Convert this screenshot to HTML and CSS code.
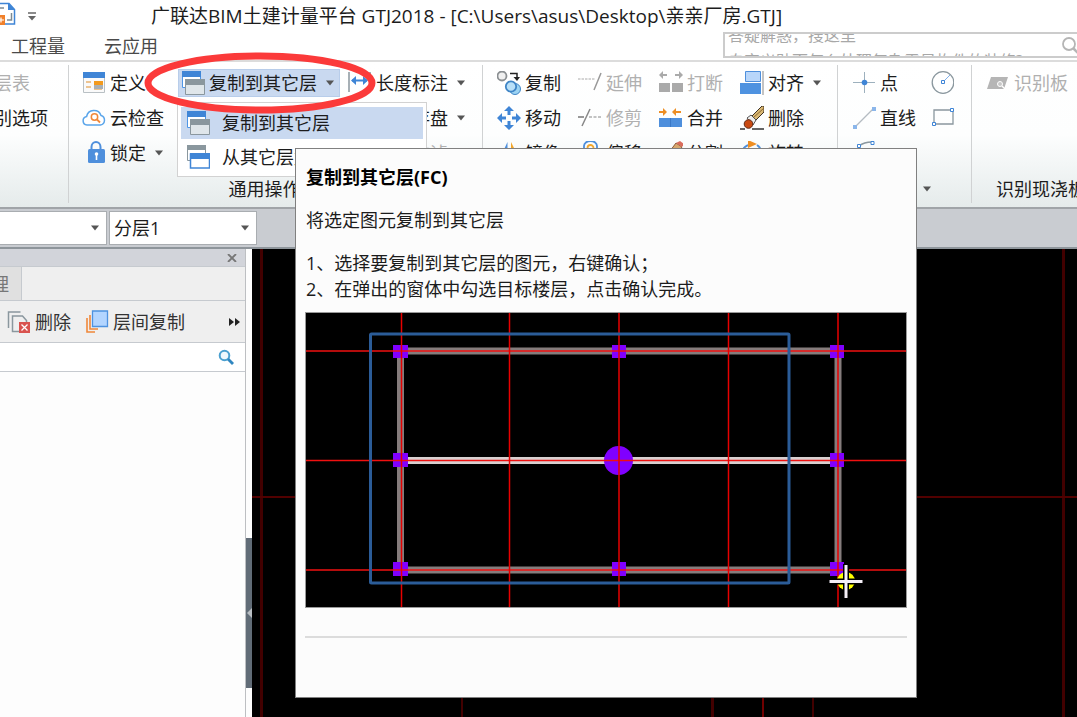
FILE: index.html
```html
<!DOCTYPE html>
<html lang="zh-CN">
<head>
<meta charset="utf-8">
<meta name="viewport" content="width=device-width, initial-scale=1">
<title>广联达BIM土建计量平台 GTJ2018</title>
<link rel="stylesheet" href="styles.css">
</head>
<body>
<svg class="defs" width="0" height="0" aria-hidden="true">
  <symbol id="caret" viewBox="0 0 10 6"><path d="M1 0.500h8L5 5.500z" fill="#555"/></symbol>
  <symbol id="copy-to" viewBox="0 0 24 26">
    <path d="M1.500 1.500h18v16h-18z" fill="#fff" stroke="#4e96e6"/><path d="M1 1h19v6H1z" fill="#3f85d6"/>
    <path d="M4.500 10h19v14.500h-19z" fill="#dfe6ea" stroke="#8a979e"/><path d="M4 9h20v6H4z" fill="#8a979e"/>
  </symbol>
  <symbol id="copy-from" viewBox="0 0 24 26">
    <path d="M1.500 1.500h18v15h-18z" fill="#fff" stroke="#8a979e"/><path d="M1 1h19v5H1z" fill="#8a979e"/>
    <path d="M4.500 10h19v14h-19z" fill="#fff" stroke="#3f85d6" stroke-width="1.500"/><path d="M4 9h20v6H4z" fill="#3f85d6"/>
  </symbol>
</svg>

<div class="app">
  <header class="titlebar">
    <button class="quick" aria-label="查看">
      <svg width="16" height="24" viewBox="0 0 16 24"><path d="M0 1.500h9l5.500 6v14.500H5" fill="#fff" stroke="#3f85d6" stroke-width="1.500"/><path d="M8 1l7 7H8z" fill="#3f85d6"/><path d="M0 6h4M11.500 11v7H7" fill="none" stroke="#7d8a92" stroke-width="1.500"/><path d="M0 13h5v10H0z" fill="#f0802b"/><path d="M0 18h4M1 15.500v5" stroke="#fff" stroke-width="1.200"/></svg>
    </button>
    <button class="quick" aria-label="自定义快速访问工具栏">
      <svg width="8" height="9" viewBox="0 0 8 9"><path d="M0 1h8" stroke="#666" stroke-width="1.500"/><path d="M0 4h8L4 8.500z" fill="#666"/></svg>
    </button>
    <h1 class="title">广联达BIM土建计量平台 GTJ2018 - [C:\Users\asus\Desktop\亲亲厂房.GTJ]</h1>
  </header>

  <nav class="tabs">
    <button class="tab">工程量</button>
    <button class="tab">云应用</button>
    <label class="search">
      <span class="ticker"><span>答疑解惑，搜这里</span><span>自定义贴面怎么处理复杂零星构件的装修?</span></span>
      <input class="search-input" type="text" aria-label="搜索">
      <svg class="search-icon" width="20" height="18" viewBox="0 0 20 18"><circle cx="8" cy="7" r="6" fill="none" stroke="#b5b5b5" stroke-width="1.800"/><path d="M12 11l6 6" stroke="#b5b5b5" stroke-width="2.500"/></svg>
    </label>
  </nav>

  <section class="ribbon">
    <div class="group group-select">
      <div class="cols"><div class="col">
        <button class="tool" disabled>楼层表</button>
        <button class="tool">识别选项</button>
      </div></div>
    </div>

    <div class="group group-common">
      <div class="cols">
        <div class="col">
          <button class="tool"><svg class="ico" viewBox="0 0 24 24"><path d="M1.500 1.500h21v20h-21z" fill="#fafafa" stroke="#b9c0c4"/><path d="M1 1h22v6H1z" fill="#3f85d6"/><path d="M4 11h5M4 16h5M12 18h8" stroke="#e9b36f" stroke-width="1.300"/><path d="M12 10h9v4h-9z" fill="#f39a1d"/><path d="M12 14h9v4h-9z" fill="#aab0b4"/></svg>定义</button>
          <button class="tool"><svg class="ico" viewBox="0 0 24 24"><path d="M5 19a4.300 4.300 0 0 1-.4-8.500A7.500 7.500 0 0 1 19 9.500 4.900 4.900 0 0 1 18.500 19z" fill="#fff" stroke="#5aa5ea" stroke-width="1.500"/><circle cx="12.500" cy="11" r="3.200" fill="none" stroke="#f0883a" stroke-width="1.500"/><path d="M15 13.500l3 3" stroke="#f0883a" stroke-width="1.800"/></svg>云检查</button>
          <button class="tool"><svg class="ico" viewBox="0 0 24 24"><path d="M9.500 10V6a4.500 5 0 0 1 9 0v4" fill="none" stroke="#4e8fdc" stroke-width="2"/><rect x="6" y="8" width="17" height="14" rx="1.500" fill="#4e8fdc"/><path d="M14.500 13v6" stroke="#fff" stroke-width="1.600"/><circle cx="14.500" cy="13" r="1.800" fill="#fff"/></svg>锁定<svg class="caret"><use href="#caret"/></svg></button>
        </div>
        <div class="col">
          <button class="tool split" aria-expanded="true"><svg class="ico tall"><use href="#copy-to"/></svg>复制到其它层<svg class="caret"><use href="#caret"/></svg></button>
          <div class="menu" role="menu">
            <button class="menu-item current" role="menuitem"><svg class="ico tall"><use href="#copy-to"/></svg>复制到其它层</button>
            <button class="menu-item" role="menuitem"><svg class="ico tall"><use href="#copy-from"/></svg>从其它层复制</button>
          </div>
        </div>
        <div class="col">
          <button class="tool"><svg class="ico" viewBox="0 0 24 24"><path d="M1 1v20M22 1v20" stroke="#8a979e" stroke-width="1.500"/><path d="M4 9.500h15" stroke="#3f85d6" stroke-width="2"/><path d="M3 9.500L8 5v9zM20 9.500L15 5v9z" fill="#3f85d6"/></svg>长度标注<svg class="caret"><use href="#caret"/></svg></button>
          <button class="tool"><svg class="ico" viewBox="0 0 24 24"><path d="M3 3h18v18H3z" fill="#4e8fdc"/></svg>图元存盘<svg class="caret"><use href="#caret"/></svg></button>
          <button class="tool" disabled><svg class="ico" viewBox="0 0 24 24"><path d="M3 4h18l-7 8v8h-4v-8z" fill="#bbb"/></svg>图元过滤</button>
        </div>
      </div>
      <div class="group-name">通用操作<svg class="caret"><use href="#caret"/></svg></div>
    </div>

    <div class="group group-modify">
      <div class="cols">
        <div class="col">
          <button class="tool"><svg class="ico" viewBox="0 0 24 24"><circle cx="5" cy="5" r="4.500" fill="#f0f0f0" stroke="#8b8f92" stroke-width="1.800"/><path d="M13 2.500h7v5" fill="none" stroke="#222" stroke-width="1.500"/><path d="M16.500 6h6.500l-3 4z" fill="#222"/><circle cx="18" cy="18" r="5.500" fill="#9cd3f2" stroke="#3f85c6"/><circle cx="14" cy="15.500" r="5.200" fill="#b9e0f8" stroke="#3f85c6" stroke-width="1.800"/></svg>复制</button>
          <button class="tool"><svg class="ico" viewBox="0 0 24 24"><path d="M12 0l5 5h-3.500v4h-3V5H7zM12 24l5-5h-3.500v-4h-3v4H7zM0 12l5-5v3.500h4v3H5V17zM24 12l-5-5v3.500h-4v3h4V17z" fill="#3f85d6"/></svg>移动</button>
          <button class="tool"><svg class="ico" viewBox="0 0 24 24"><path d="M10.500 1v20L2 19z" fill="#4e8fdc"/><path d="M14 1v20l9-2z" fill="#f3a72c"/></svg>镜像</button>
        </div>
        <div class="col">
          <button class="tool" disabled><svg class="ico" viewBox="0 0 24 24"><path d="M0 8h17" stroke="#aaa" stroke-dasharray="2.500 1"/><path d="M16 19l7-17" stroke="#999" stroke-width="1.500"/></svg>延伸</button>
          <button class="tool" disabled><svg class="ico" viewBox="0 0 24 24"><path d="M0 11h6" stroke="#777" stroke-width="1.500"/><path d="M11 11h13" stroke="#888" stroke-width="1.200" stroke-dasharray="3 1.500"/><path d="M4 20l8-17" stroke="#888" stroke-width="1.500"/></svg>修剪</button>
          <button class="tool"><svg class="ico" viewBox="0 0 24 24"><path d="M6 20V5a6.500 5 0 0 1 13 0v15" fill="none" stroke="#4e8fdc" stroke-width="1.800"/><path d="M9.500 20V7a3 3 0 0 1 6 0v13" fill="none" stroke="#f3a72c" stroke-width="1.800"/></svg>偏移</button>
        </div>
        <div class="col">
          <button class="tool" disabled><svg class="ico" viewBox="0 0 24 24"><path d="M0 12h11v9H0zM13 12h11v9H13z" fill="#aaa"/><path d="M0 4l4-4v3h4v2H4v3zM24 4l-4-4v3h-4v2h4v3z" fill="#aaa"/></svg>打断</button>
          <button class="tool"><svg class="ico" viewBox="0 0 24 24"><path d="M0 12h11v9H0zM12 12h11v9H12z" fill="#4e8fdc"/><path d="M11 12h1v9h-1z" fill="#3a78c6"/><path d="M8 6l-4-4v3H0v2h4v3zM13 6l4-4v3h5v2h-5v3z" fill="#ee8e23"/></svg>合并</button>
          <button class="tool"><svg class="ico" viewBox="0 0 24 24"><path d="M8 14l9-12 6 4-9 12z" fill="#d8a86e" stroke="#8a5a38"/><path d="M17 2l4-2 4 3-2 3z" fill="#d96c5c"/></svg>分割</button>
        </div>
        <div class="col">
          <button class="tool"><svg class="ico" viewBox="0 0 24 24"><path d="M5.500 .500h15v10h-15z" fill="#b8d6fa" stroke="#4e8fdc"/><path d="M0 12h21v11H0z" fill="#4e92e0"/><path d="M23 0v24" stroke="#888"/></svg>对齐<svg class="caret"><use href="#caret"/></svg></button>
          <button class="tool"><svg class="ico" viewBox="0 0 24 24"><path d="M0 23h5M12 23h12" stroke="#333" stroke-width="1.500"/><path d="M11 11L22 0h2v6l-9 9z" fill="#d9b873" stroke="#3d3023"/><path d="M13 12L24 2" stroke="#8a6630"/><path d="M7 12l4-3 5 5-3 5z" fill="#eee" stroke="#555"/><circle cx="8.500" cy="18" r="4.300" fill="#c94a12" stroke="#5d2a16"/></svg>删除</button>
          <button class="tool"><svg class="ico" viewBox="0 0 24 24"><path d="M3 17a9 9 0 0 1 6-13M17 4a9 9 0 0 1 4 6" fill="none" stroke="#4e8fdc" stroke-width="2"/><path d="M8 -1l9 4-9 4z" fill="#ee8e23"/></svg>旋转</button>
        </div>
      </div>
    </div>

    <div class="group group-draw">
      <div class="cols">
        <div class="col">
          <button class="tool"><svg class="ico" viewBox="0 0 24 24"><path d="M1 11.500h22M12.500 1v21" stroke="#9db0bd"/><circle cx="12.500" cy="11.500" r="2.800" fill="#3f85d6"/></svg>点</button>
          <button class="tool"><svg class="ico" viewBox="0 0 24 24"><path d="M3 21L21 3" stroke="#b4bcc2" stroke-width="1.300"/><path d="M1 19h4v4H1zM20 1h4v4h-4z" fill="#8bb6ea"/></svg>直线</button>
          <button class="tool" aria-label="弧"><svg class="ico" viewBox="0 0 24 24"><path d="M7 5q5-4 13-4" fill="none" stroke="#8a979e" stroke-width="1.500"/><path d="M5.500 3.500h3v3h-3zM19 .500h3v3h-3z" fill="#fff" stroke="#3f85d6"/></svg></button>
        </div>
        <div class="col">
          <button class="tool" aria-label="圆"><svg class="ico" viewBox="0 0 24 24"><circle cx="13" cy="11.500" r="10.800" fill="none" stroke="#8a979e" stroke-width="1.300"/><path d="M14 10l6-6" stroke="#7fb0ea"/><path d="M11.500 9.500h3v3h-3z" fill="#fff" stroke="#3f85d6"/></svg></button>
          <button class="tool" aria-label="矩形"><svg class="ico" viewBox="0 0 24 24"><path d="M4 4h19v14H4z" fill="none" stroke="#8a979e" stroke-width="1.300"/><path d="M2.500 16.500h3v3h-3zM20.500 2.500h3v3h-3z" fill="#fff" stroke="#3f85d6"/></svg></button>
        </div>
      </div>
      <div class="group-name">绘图<svg class="caret"><use href="#caret"/></svg></div>
    </div>

    <div class="group group-slab">
      <div class="cols"><div class="col">
        <button class="tool" disabled><svg class="ico" viewBox="0 0 24 24"><path d="M5 6h17l-4 12H1z" fill="#b5b5b5"/><circle cx="14" cy="13" r="2.500" fill="#c8c8c8" stroke="#fff"/><path d="M16 15l4 4" stroke="#fff" stroke-width="1.500"/></svg>识别板</button>
      </div></div>
      <div class="group-name">识别现浇板</div>
    </div>

    <svg class="marker" width="236" height="64" viewBox="0 0 236 64" aria-hidden="true"><ellipse cx="118" cy="32" rx="112" ry="27" fill="none" stroke="#fb3a3a" stroke-width="7"/></svg>
  </section>

  <div class="options">
    <span class="combo combo-floor"><select aria-label="楼层"><option></option></select><svg class="caret"><use href="#caret"/></svg></span>
    <span class="combo combo-layer"><select aria-label="分层"><option>分层1</option></select><svg class="caret"><use href="#caret"/></svg></span>
  </div>

  <main class="workspace">
    <aside class="panel">
      <div class="panel-head"><button aria-label="关闭"><svg width="10" height="8" viewBox="0 0 10 8"><path d="M1 0l8 8M9 0L1 8" stroke="#777" stroke-width="1.800"/></svg></button></div>
      <div class="panel-tabs"><button class="panel-tab">图纸管理</button></div>
      <div class="panel-tools">
        <button class="tool"><svg class="ico" viewBox="0 0 24 24"><path d="M1.500 18V2h12M5.500 21.500V6h10l4 4.500v11z" fill="none" stroke="#8a979e" stroke-width="1.500"/><path d="M12 12h11v11H12z" fill="#d9534f"/><path d="M14.500 14.500l6 6M20.500 14.500l-6 6" stroke="#fff" stroke-width="1.300"/></svg>删除</button>
        <button class="tool"><svg class="ico" viewBox="0 0 24 24"><path d="M2 8v14h8M5 5v14h8" fill="none" stroke="#f0883a" stroke-width="1.600"/><path d="M7.500 1h15v15.500h-15z" fill="#b3d5ff" stroke="#4e92e0" stroke-width="1.300"/></svg>层间复制</button>
        <button class="more" aria-label="更多"><svg width="12" height="8" viewBox="0 0 12 8"><path d="M0 0l5 4-5 4zM6 0l5 4-5 4z" fill="#222"/></svg></button>
      </div>
      <label class="panel-search"><input type="text" aria-label="搜索构件"><svg width="16" height="16" viewBox="0 0 16 16"><circle cx="6.500" cy="6.500" r="4.800" fill="#eef8fd" stroke="#4aa0d0" stroke-width="2"/><path d="M10 10l5 5" stroke="#2f86c0" stroke-width="2.800"/></svg></label>
    </aside>
    <div class="splitter"><button class="handle" aria-label="折叠"><svg width="5" height="10" viewBox="0 0 5 10"><path d="M5 0v10L0 5z" fill="#b9bec3"/></svg></button></div>
    <div class="canvas">
      <svg width="100%" height="100%" aria-hidden="true">
        <g fill="#420000"><rect x="8" width="3" height="100%"/><rect x="209" y="400" width="2" height="100%"/><rect x="459" y="400" width="3" height="100%"/><rect x="560" y="400" width="2" height="100%"/><rect x="810" width="3" height="100%"/></g>
        <rect x="510" y="400" width="2" height="100%" fill="#700000"/><rect y="247" width="100%" height="2" fill="#520000"/>
      </svg>
    </div>
  </main>

  <div class="tooltip" role="tooltip">
    <h2>复制到其它层(FC)</h2>
    <p>将选定图元复制到其它层</p>
    <ol><li>1、选择要复制到其它层的图元，右键确认；</li><li>2、在弹出的窗体中勾选目标楼层，点击确认完成。</li></ol>
    <svg class="demo" viewBox="0 0 602 296" role="img" aria-label="复制操作示意">
      <path d="M0 0h602v296H0z" fill="#000"/>
      <path d="M95.500 39h437.500v219H95.500z" fill="none" stroke="#857c7c" stroke-width="7"/>
      <path d="M96 148.500h436" stroke="#d8d0d0" stroke-width="7"/>
      <g fill="#8000ff"><path d="M88 33h15v13H88zM307 33h14v13h-14zM525 33h14v13h-14zM88 141h15v14H88zM525 141h14v14h-14zM88 250h15v14H88zM307 250h14v14h-14zM525 250h14v14h-14z"/><circle cx="313.500" cy="148.500" r="14.500"/></g>
      <path d="M0 39h602M0 148.500h602M0 258h602" stroke="#f01010" stroke-width="1.500"/><path d="M96.500 0v296M204.500 0v296M314 0v296M423.500 0v296M533 0v296" stroke="#e80000" stroke-width="1.500"/>
      <rect x="65.500" y="22" width="418.500" height="249" rx="1" fill="none" stroke="#2b5c98" stroke-width="3"/>
      <circle cx="541" cy="269" r="9" fill="#ff0"/><path d="M541 252v34M524 269.500h34" stroke="#000" stroke-width="6"/><path d="M541 253v33M524.500 269.500h33" stroke="#f5f0f8" stroke-width="3"/>
      <rect x=".5" y=".5" width="601" height="295" fill="none" stroke="#999"/>
    </svg>
    <hr>
  </div>
</div>
</body>
</html>
```

FILE: styles.css
```css
* { box-sizing: border-box; }
body { margin: 0; background: #fff; }
body, button, input, select {
  font-family: "Open Sans", "Noto Sans CJK SC", sans-serif;
  font-size: 18px;
  line-height: 26px;
  color: #1c1c1c;
}
button { padding: 0; border: 0; background: none; white-space: nowrap; }
svg { display: block; flex: none; }
.defs { position: absolute; }
.ico { width: 24px; height: 24px; margin-right: 4px; }
.ico.tall { height: 26px; }
.caret { width: 10px; height: 6px; margin-left: 8px; }

.app { position: relative; display: flex; flex-direction: column; height: 100vh; overflow: hidden; }

.titlebar { display: flex; align-items: center; height: 32px; flex: none; }
.quick:first-child { margin-bottom: 4px; }
.quick:nth-child(2) { margin-left: 12px; }
.title { margin: 0 0 0 115px; font-size: 19px; font-weight: 400; white-space: nowrap; }

.tabs { display: flex; align-items: center; height: 30px; flex: none; padding-left: 11px; gap: 39px; border-bottom: 2px solid #dcdcdc; }
.tab { color: #4a4a4a; }
.search { display: grid; flex: 0 0 360px; height: 26px; margin: 0 -6px 2px auto; overflow: hidden; border: 2px solid #ccc; }
.search > * { grid-area: 1 / 1; }
.ticker { display: flex; flex-direction: column; margin: -12px 0 0 3px; font-size: 16px; line-height: 26px; color: #a8a8a8; white-space: nowrap; }
.search-input { min-width: 0; height: 22px; border: 0; background: transparent; }
.search-icon { justify-self: end; margin: 3px 0 0; }

.ribbon { position: relative; display: flex; flex: none; height: 147px; padding-top: 3px; background: linear-gradient(#fff 0%, #fdfefe 50%, #e5ebeb 100%); border-bottom: 2px solid #a0a4a8; }
.group { display: flex; flex-direction: column; flex: none; margin-bottom: 4px; border-right: 1px solid #d0d2d3; }
.cols { display: grid; height: 105px; flex: none; }
.tool { display: flex; align-items: center; height: 35px; }
.tool:disabled { color: #b0b0b0; }
.group-name { display: flex; align-items: center; justify-content: center; height: 37px; flex: none; white-space: nowrap; }
.group-select { width: 69px; }
.group-select .cols { margin-left: -24px; }
.group-common { width: 414px; }
.group-common .cols { grid-template-columns: 96px 170px auto; padding-left: 13px; }
.group-common .group-name { padding-right: 4px; }
.group-common .col { position: relative; }
.group-modify { width: 355px; padding-left: 14px; }
.group-modify .cols { grid-template-columns: repeat(4, 81px); }
.group-draw { width: 134px; }
.group-draw .cols { grid-template-columns: 78px auto; padding-left: 14px; }
.group-slab { width: 138px; border-right: 0; }
.group-slab .cols { padding-left: 14px; }
.split { height: 28px; margin-top: 4px; padding: 0 4px 0 2px; background: #c9d9f0; border: 1px solid #b8cdea; }

.menu { position: absolute; z-index: 1; top: 37px; left: -1px; width: 250px; padding: 4px 3px 2px; background: #fff; border: 1px solid #d2d2d2; }
.menu-item { display: flex; align-items: center; width: 100%; height: 34px; padding-left: 5px; }
.menu-item .ico { margin-right: 12px; }
.menu-item.current { background: #c9d9f0; height: 32px; margin-bottom: 1px; }

.marker { position: absolute; z-index: 3; left: 142px; top: -11px; }

.options { display: flex; align-items: center; gap: 2px; flex: none; height: 40px; background: #c9ccd1; border-bottom: 2px solid #8e959b; }
.combo { display: grid; align-items: center; height: 34px; background: #fff; border: 1px solid #a9adb1; }
.combo > * { grid-area: 1 / 1; }
.combo select { width: 100%; height: 32px; padding: 0 24px 0 4px; border: 0; background: none; appearance: none; }
.combo .caret { justify-self: end; margin-right: 6px; pointer-events: none; }
.combo-floor { width: 107px; border-left: 0; }
.combo-layer { width: 148px; }

.workspace { display: flex; flex: 1; min-height: 0; }
.panel { display: flex; flex-direction: column; flex: 0 0 246px; min-width: 0; border-right: 1px solid #bdbfc2; background: #fdfdfd; }
.panel-head { display: flex; align-items: center; justify-content: flex-end; height: 18px; padding-right: 8px; background: #d2d4da; border-bottom: 1px solid #c6cacf; }
.panel-head button { line-height: 0; }
.panel-tabs { display: flex; height: 34px; background: #efefef; border-bottom: 1px solid #c6cacf; }
.panel-tab { display: flex; align-items: center; justify-content: flex-end; width: 22px; padding-right: 12px; overflow: hidden; background: #e0e0e0; border-right: 1px solid #c6cacf; color: #777; }
.panel-tools { display: flex; align-items: center; height: 42px; padding: 0 4px 0 7px; background: #efefef; border-bottom: 1px solid #c6cacf; }
.panel-tools .tool + .tool { margin-left: 14px; }
.panel-tools .tool { color: #333; }
.more { margin-left: auto; }
.panel-search { display: flex; align-items: center; height: 29px; padding-right: 11px; border-bottom: 1px solid #c6cacf; background: #fff; }
.panel-search input { flex: 1; min-width: 0; height: 26px; border: 0; background: none; }
.splitter { display: flex; flex-direction: column; flex: 0 0 6px; padding-bottom: 29px; background: #fdfdfd; }
.handle { display: flex; align-items: center; justify-content: flex-end; height: 150px; margin-top: auto; background: #616c77; }
.canvas { flex: 1; min-width: 0; background: #000; overflow: hidden; }

.tooltip { position: absolute; z-index: 2; left: 295px; top: 148px; width: 622px; padding: 15px 9px 59px; background: #fcfcfc; border: 1px solid #808080; }
.tooltip h2 { margin: 0 0 17px 1px; font-size: 18px; line-height: 26px; color: #000; }
.tooltip p { margin: 0 0 17px 1px; }
.tooltip ol { margin: 0 0 10px 1px; padding: 0; list-style: none; }
.demo { width: 602px; height: 296px; }
.tooltip hr { margin: 28px 0 0; border: 0; border-top: 2px solid #dcdcdc; }
```
